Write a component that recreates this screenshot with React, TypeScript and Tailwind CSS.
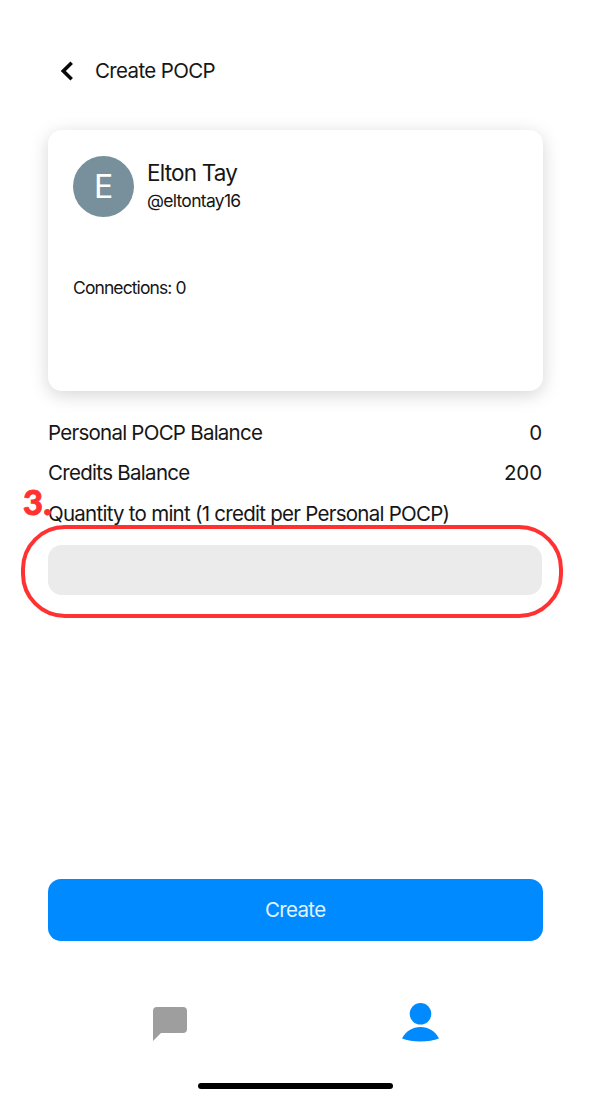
import React from "react";

function BalanceRow({ label, value, labelClass }: { label: string; value: string; labelClass: string }) {
  return (
    <div className="flex h-[40.5px] items-center justify-between whitespace-nowrap text-[20.5px]">
      <span className={labelClass}>{label}</span>
      <span className="tracking-[-0.1px]">{value}</span>
    </div>
  );
}

export default function App() {
  return (
    <div className="flex h-[1100px] w-[590px] flex-col overflow-hidden bg-white px-12 font-['Inter','Liberation_Sans',sans-serif] leading-none text-[#161616]">
      <header className="mt-[51px] flex h-10 items-center whitespace-nowrap">
        <button aria-label="Back" className="ml-3 w-[35px]">
          <svg width="14" height="20" viewBox="0 0 14 20" fill="none">
            <path d="M11.700 1.800 3.300 10l8.400 8.200" stroke="#080808" strokeWidth="3.6" />
          </svg>
        </button>
        <h1 className="text-[20.5px] tracking-[-0.65px]">Create POCP</h1>
      </header>

      <section className="mt-[39px] h-[261px] w-[494.5px] rounded-[14px] bg-white px-[25px] pt-[25px] shadow-[0_4px_18px_rgba(0,0,0,0.17)]">
        <div className="flex h-[61px] pt-px">
          <div className="flex size-[61px] items-center justify-center rounded-full bg-[#78909c] pt-px text-[32px] text-white">
            E
          </div>
          <div className="ml-[13px] whitespace-nowrap">
            <div className="mt-[5px] text-[22.5px] leading-6 tracking-[-0.8px]">Elton Tay</div>
            <div className="mt-[6px] text-[17.5px] leading-5 tracking-[-0.7px]">@eltontay16</div>
          </div>
        </div>
        <div className="mt-[62px] text-[17.5px] leading-5 tracking-[-0.9px]">Connections: 0</div>
      </section>

      <section className="mt-[21.5px] w-[494px]">
        <BalanceRow label="Personal POCP Balance" value="0" labelClass="tracking-[-0.75px]" />
        <BalanceRow label="Credits Balance" value="200" labelClass="tracking-[-0.7px]" />
        <div className="relative flex h-[40.5px] items-center whitespace-nowrap text-[20.5px] tracking-[-0.74px]">
          <label htmlFor="quantity">Quantity to mint (1 credit per Personal POCP)</label>
          <span className="absolute left-[-25px] top-[-10px] font-['Lato',sans-serif] text-[34.5px] font-black leading-9 tracking-[0.2px] text-[#ff3131] [-webkit-text-stroke:0.8px_#ff3131]">
            3.
          </span>
        </div>
        <div className="relative mt-[11px] h-[50px]">
          <input id="quantity" className="block h-[50px] w-[494px] rounded-[14px] bg-[#ebebeb] px-4 outline-none" />
          <div className="pointer-events-none absolute left-[-27px] top-[-20px] h-[93px] w-[542px] rounded-[44px] border-4 border-[#ff3131]" />
        </div>
      </section>

      <button className="mt-[284px] h-[62px] w-[494.5px] shrink-0 rounded-[13px] bg-[#008aff] text-[20.5px] tracking-[-0.65px] text-[#e0f3ff]">
        Create
      </button>

      <nav className="mt-[61px] flex h-10 shrink-0 items-start">
        <button aria-label="Messages" className="ml-[104px] mt-[5px]">
          <svg width="36" height="35" viewBox="0 0 36 35" className="block">
            <path d="M1 34V4Q1 0 5 0H31Q35 0 35 4V22Q35 26 31 26H9Z" fill="#9e9e9e" />
          </svg>
        </button>
        <button aria-label="Profile" className="ml-[213px] mt-px">
          <svg width="39" height="39" viewBox="0 0 39 39" className="block" fill="#008aff">
            <circle cx="19.5" cy="10.8" r="10.8" />
            <path d="M1 35.500C5 28 11.500 24 19.500 24s14.500 4 18.500 11.500C33 37.500 26.500 38.500 19.500 38.500S6 37.500 1 35.500Z" />
          </svg>
        </button>
      </nav>
      <div className="ml-[150px] mt-[41px] h-1.5 w-[195px] shrink-0 rounded-full bg-black" />
    </div>
  );
}
